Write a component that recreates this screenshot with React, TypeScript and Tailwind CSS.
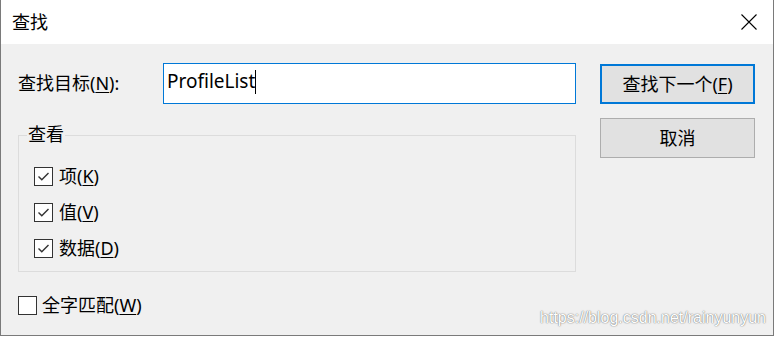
import React from 'react'

const font = { fontFamily: '"Noto Sans", "Noto Sans CJK SC", sans-serif' }

function Mn({ children }: { children: React.ReactNode }) {
  return <span className="underline underline-offset-2 decoration-1">{children}</span>
}

function CheckBox({ checked }: { checked: boolean }) {
  return (
    <div className="w-[19px] h-[19px] border border-[#333333] bg-white flex items-center justify-center shrink-0">
      {checked && (
        <svg width="15" height="15" viewBox="0 0 15 15" fill="none">
          <path d="M2.5 7.5 L5.8 10.8 L12.5 4" stroke="#333333" strokeWidth="1.4" />
        </svg>
      )}
    </div>
  )
}

export default function App() {
  const options = [
    { label: '项', key: 'K' },
    { label: '值', key: 'V' },
    { label: '数据', key: 'D' },
  ]

  return (
    <div className="w-[775px] h-[337px] bg-white overflow-hidden" style={font}>
      <div className="relative w-[774px] h-[336px] border-l border-r border-b border-[#7a7a7a] bg-[#f0f0f0] flex flex-col">
        {/* Title bar */}
        <div className="h-[44px] bg-white flex items-center justify-between pl-[11px] pr-[16px] shrink-0">
          <span className="text-[18px] text-black">查找</span>
          <svg width="16" height="16" viewBox="0 0 16 16" fill="none">
            <path d="M0.5 0.5 L15.5 15.5 M15.5 0.5 L0.5 15.5" stroke="#000" strokeWidth="1.1" />
          </svg>
        </div>

        {/* Body */}
        <div className="flex flex-1 pl-[17px] pt-[19px]">
          <div className="w-[558px] flex flex-col">
            <div className="flex items-center h-[41px]">
              <span className="w-[145px] text-[18px] text-black">
                查找目标(<Mn>N</Mn>):
              </span>
              <div className="w-[413px] h-[41px] border border-[#0078d7] bg-white flex items-start pl-[3px] pt-[1px]">
                <span className="text-[19px] text-black leading-[32px]">ProfileList</span>
                <span className="w-px h-[24px] bg-black mt-[5px]" />
              </div>
            </div>

            <div className="relative mt-[31px] h-[137px] border border-[#dcdcdc] pl-[15px] pt-[22px]">
              <span className="absolute left-[8px] top-[-12px] px-px bg-[#f0f0f0] text-[18px] leading-[20px] text-black">
                查看
              </span>
              {options.map(o => (
                <div key={o.key} className="flex items-center gap-[6px] h-[36px]">
                  <CheckBox checked />
                  <span className="text-[18px] text-black">
                    {o.label}(<Mn>{o.key}</Mn>)
                  </span>
                </div>
              ))}
            </div>

            <div className="flex items-center gap-[5px] mt-[20px]">
              <CheckBox checked={false} />
              <span className="text-[18px] text-black">
                全字匹配(<Mn>W</Mn>)
              </span>
            </div>
          </div>

          <div className="ml-[24px] flex flex-col gap-[14px]">
            <button className="w-[155px] h-[40px] mt-px border-2 border-[#0078d7] bg-[#e1e1e1] text-[18px] text-black flex items-center justify-center">
              查找下一个(<Mn>F</Mn>)
            </button>
            <button className="w-[155px] h-[40px] border border-[#adadad] bg-[#e1e1e1] text-[18px] text-black flex items-center justify-center">
              取消
            </button>
          </div>
        </div>

        <span
          className="absolute right-[7px] bottom-[7px] text-[16px] leading-[20px] text-white [text-shadow:0_0_1px_rgba(0,0,0,0.6),0_0_2px_rgba(0,0,0,0.25)]"
          style={{ fontFamily: '"Liberation Sans", Arial, sans-serif' }}
        >
          https://blog.csdn.net/rainyunyun
        </span>
      </div>
    </div>
  )
}
